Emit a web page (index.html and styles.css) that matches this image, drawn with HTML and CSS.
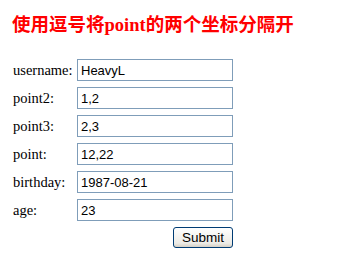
FILE: index.html
```html
<!DOCTYPE html>
<html lang="zh">
<head>
  <meta charset="UTF-8" />
  <title>point</title>
  <link rel="stylesheet" href="styles.css">
</head>
<body>
  <h3 class="title">使用逗号将point的两个坐标分隔开</h3>
  <form class="point-form">
    <table class="form-table">
      <tr>
        <td class="label">username:</td>
        <td><input class="field" type="text" value="HeavyL"></td>
      </tr>
      <tr>
        <td class="label">point2:</td>
        <td><input class="field" type="text" value="1,2"></td>
      </tr>
      <tr>
        <td class="label">point3:</td>
        <td><input class="field" type="text" value="2,3"></td>
      </tr>
      <tr>
        <td class="label">point:</td>
        <td><input class="field" type="text" value="12,22"></td>
      </tr>
      <tr>
        <td class="label">birthday:</td>
        <td><input class="field" type="text" value="1987-08-21"></td>
      </tr>
      <tr>
        <td class="label">age:</td>
        <td><input class="field" type="text" value="23"></td>
      </tr>
      <tr>
        <td colspan="2" class="actions"><button type="button" class="submit">Submit</button></td>
      </tr>
    </table>
  </form>
</body>
</html>
```

FILE: styles.css
```css
/* page */
body {
  margin: 0;
  padding: 8px;
  font-family: "Liberation Serif", "Noto Sans CJK SC", serif;
  font-size: 14.5px;
  color: #000;
  background: #fff;
}

.title {
  margin: 5px 0 0 4px;
  font-size: 18.5px;
  font-weight: bold;
  line-height: 24px;
  color: #f00;
  font-family: "Liberation Serif", "Noto Sans CJK SC", serif;
}

/* form table */
.point-form {
  margin: 0;
}

.form-table {
  margin-top: 22px;
  border-collapse: collapse;
  table-layout: fixed;
  width: 225px;
}

.form-table td {
  padding: 0 0 6px 0;
  height: 22px;
  vertical-align: middle;
}

.label {
  padding-left: 5px !important;
  width: 64px;
  white-space: nowrap;
}

.field {
  box-sizing: border-box;
  width: 156px;
  height: 22px;
  margin: 0;
  padding: 1px 3px;
  border: 1px solid #7f9db9;
  font-family: "Liberation Sans", Arial, sans-serif;
  font-size: 13px;
  color: #000;
}

.actions {
  text-align: right;
}

.submit {
  width: 60px;
  height: 21px;
  margin-top: -1px;
  padding: 0;
  border: 1px solid #003c74;
  border-radius: 3px;
  background: linear-gradient(#ffffff, #ecebe6 80%, #d6d0c5);
  font-family: "Liberation Sans", Arial, sans-serif;
  font-size: 13.5px;
  color: #000;
}
```
